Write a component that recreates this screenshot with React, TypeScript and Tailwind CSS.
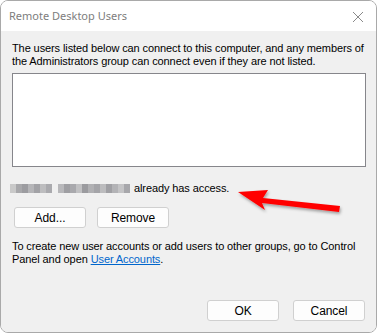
import React from 'react';

const blurA = ['#c9c9c9', '#a8a8ab', '#9c9ca0', '#b5b5b8', '#a2a2a6', '#bdbdbf', '#aaaaae'];
const blurB = ['#b8b8bb', '#9f9fa3', '#a9a9ad', '#c1c1c3', '#9b9b9f', '#b0b0b3', '#a4a4a8', '#bcbcbe', '#a0a0a4', '#b3b3b6', '#c4c4c6', '#a7a7ab'];

function Pixelated({ shades }: { shades: string[] }) {
  return (
    <span className="inline-flex h-[9px]">
      {shades.map((c, i) => (
        <span key={i} className="w-[6px] h-[9px]" style={{ backgroundColor: c }} />
      ))}
    </span>
  );
}

function Btn({ children }: { children: React.ReactNode }) {
  return (
    <button className="w-[72px] h-[21px] rounded-[3px] border border-[#d0d0d0] bg-[#fdfdfd] text-[12px] text-black leading-none">
      {children}
    </button>
  );
}

export default function App() {
  return (
    <div className="relative w-[377px] h-[333px] bg-white" style={{ fontFamily: '"Liberation Sans", Arial, sans-serif' }}>
      <div className="flex flex-col w-[377px] h-[333px] border border-[#a9a9a9] rounded-[8px] overflow-hidden">
        <div className="flex items-center justify-between h-[30px] bg-white pl-[8px] pr-[12px]">
          <span className="text-[11px] text-[#7d7d7d]" style={{ fontFamily: '"Noto Sans", "Open Sans", sans-serif' }}>
            Remote Desktop Users
          </span>
          <svg width="12" height="12" viewBox="0 0 12 12" className="mt-[2px]">
            <path d="M1 1L11 11M11 1L1 11" stroke="#8a8a8a" strokeWidth="1" />
          </svg>
        </div>
        <div className="flex flex-col flex-1 bg-[#f0f0f0] pl-[11px] pr-[10px] pt-[11px] text-[11px] tracking-[-0.1px] leading-[13px] text-black whitespace-nowrap">
          <p>
            The users listed below can connect to this computer, and any members of
            <br />
            the Administrators group can connect even if they are not listed.
          </p>
          <div className="mt-[5px] h-[94px] border border-[#86868b] bg-white" />
          <div className="flex items-center mt-[15px] h-[13px] -ml-[2px]">
            <Pixelated shades={blurA} />
            <span className="w-[6px]" />
            <Pixelated shades={blurB} />
            <span className="ml-[4px]">already has access.</span>
          </div>
          <div className="flex gap-[11px] mt-[12px] ml-[2px]">
            <Btn>Add...</Btn>
            <Btn>Remove</Btn>
          </div>
          <p className="mt-[12px]">
            To create new user accounts or add users to other groups, go to Control
            <br />
            Panel and open <span className="text-[#0066cc] underline">User Accounts</span>.
          </p>
          <div className="flex justify-end gap-[14px] mt-[34px] pr-[1px]">
            <Btn>OK</Btn>
            <Btn>Cancel</Btn>
          </div>
        </div>
      </div>
      <svg className="absolute left-[230px] top-[182px]" width="120" height="36" viewBox="0 0 120 36">
        <defs>
          <filter id="sh" x="-20%" y="-50%" width="140%" height="200%">
            <feDropShadow dx="1" dy="2" stdDeviation="1.5" floodColor="#000" floodOpacity="0.35" />
          </filter>
        </defs>
        <g filter="url(#sh)">
          <path d="M8 10 L38 8 L33 16 L110 24 L109 30 L32 21 L35 28 Z" fill="#ff0000" />
        </g>
      </svg>
    </div>
  );
}
